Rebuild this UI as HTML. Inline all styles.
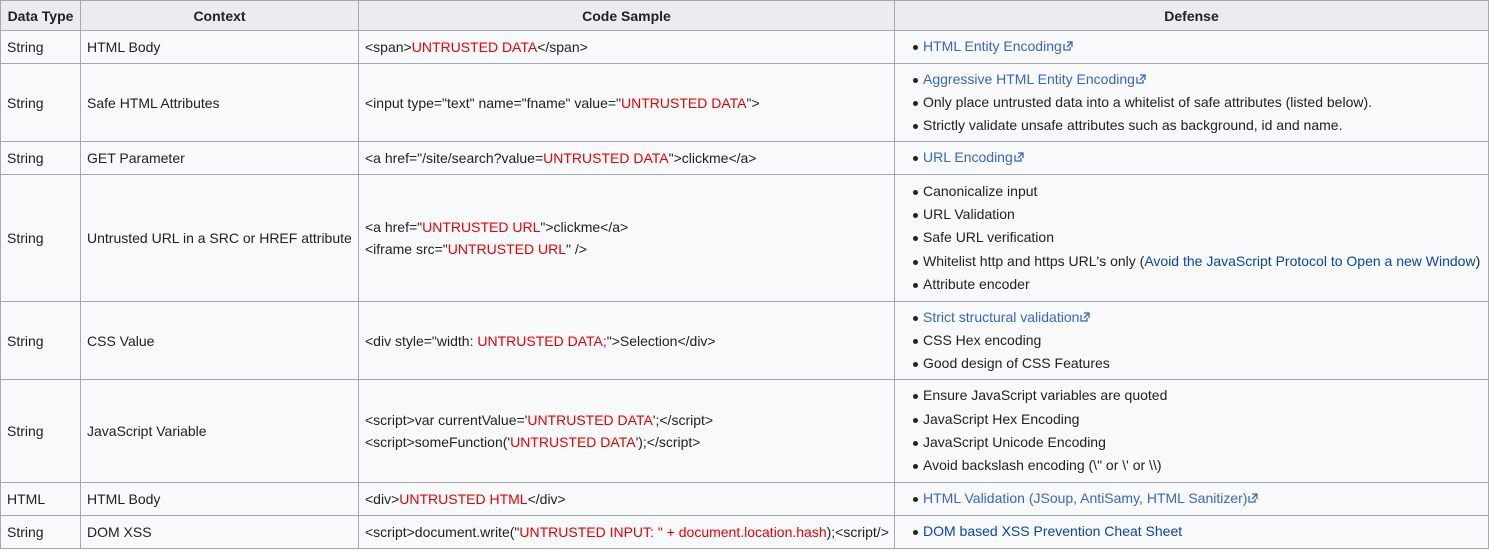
<!DOCTYPE html>
<html><head><meta charset="utf-8"><style>
body{margin:0;background:#fff;font-family:"Liberation Sans",Arial,sans-serif;font-size:14px;color:#202122}
table{position:absolute;left:0;top:0;border-collapse:collapse;table-layout:fixed;width:1488px;background:#f8f9fa}
td,th{border:1px solid #a2a9b1;padding:0 6px;vertical-align:middle;text-align:left;white-space:nowrap;overflow:hidden}
th{background:#eaecf0;text-align:center;font-weight:bold;height:29px}
.r{color:#ee0000}
a{color:#3366cc;text-decoration:none}
a.i{color:#0645ad}
ul{margin:0;padding:0 0 0 22px;list-style:none}
li{position:relative;line-height:23.3px}
li:before{content:"";position:absolute;left:-10px;top:10px;width:5px;height:5px;border-radius:50%;background:#202122}
.e{display:inline-block;width:10px;height:10px;vertical-align:0px;margin-left:1px}
.c div{line-height:22px}
</style></head><body>
<table>
<colgroup><col style="width:80px"><col style="width:278px"><col style="width:536px"><col style="width:594px"></colgroup>
<tr><th>Data Type</th><th>Context</th><th>Code Sample</th><th>Defense</th></tr>
<tr style="height:33px"><td>String</td><td>HTML Body</td><td>&lt;span&gt;<span class="r">UNTRUSTED DATA</span>&lt;/span&gt;</td><td><ul><li><a>HTML Entity Encoding</a><svg class="e" viewBox="0 0 10 10"><path d="M1 3v6h6V6M4 1h5v5M9 1L4 6" fill="none" stroke="#3366cc" stroke-width="1.3"/></svg></li></ul></td></tr>
<tr style="height:78px"><td>String</td><td>Safe HTML Attributes</td><td>&lt;input type="text" name="fname" value="<span class="r">UNTRUSTED DATA</span>"&gt;</td><td><ul><li><a>Aggressive HTML Entity Encoding</a><svg class="e" viewBox="0 0 10 10"><path d="M1 3v6h6V6M4 1h5v5M9 1L4 6" fill="none" stroke="#3366cc" stroke-width="1.3"/></svg></li><li>Only place untrusted data into a whitelist of safe attributes (listed below).</li><li>Strictly validate unsafe attributes such as background, id and name.</li></ul></td></tr>
<tr style="height:33px"><td>String</td><td>GET Parameter</td><td>&lt;a href="/site/search?value=<span class="r">UNTRUSTED DATA</span>"&gt;clickme&lt;/a&gt;</td><td><ul><li><a>URL Encoding</a><svg class="e" viewBox="0 0 10 10"><path d="M1 3v6h6V6M4 1h5v5M9 1L4 6" fill="none" stroke="#3366cc" stroke-width="1.3"/></svg></li></ul></td></tr>
<tr style="height:127px"><td>String</td><td>Untrusted URL in a SRC or HREF attribute</td><td class="c"><div>&lt;a href="<span class="r">UNTRUSTED URL</span>"&gt;clickme&lt;/a&gt;</div><div>&lt;iframe src="<span class="r">UNTRUSTED URL</span>" /&gt;</div></td><td><ul><li>Canonicalize input</li><li>URL Validation</li><li>Safe URL verification</li><li>Whitelist http and https URL's only (<a class="i">Avoid the JavaScript Protocol to Open a new Window</a>)</li><li>Attribute encoder</li></ul></td></tr>
<tr style="height:78px"><td>String</td><td>CSS Value</td><td>&lt;div style="width: <span class="r">UNTRUSTED DATA;</span>"&gt;Selection&lt;/div&gt;</td><td><ul><li><a>Strict structural validation</a><svg class="e" viewBox="0 0 10 10"><path d="M1 3v6h6V6M4 1h5v5M9 1L4 6" fill="none" stroke="#3366cc" stroke-width="1.3"/></svg></li><li>CSS Hex encoding</li><li>Good design of CSS Features</li></ul></td></tr>
<tr style="height:103px"><td>String</td><td>JavaScript Variable</td><td class="c"><div>&lt;script&gt;var currentValue='<span class="r">UNTRUSTED DATA</span>';&lt;/script&gt;</div><div>&lt;script&gt;someFunction('<span class="r">UNTRUSTED DATA</span>');&lt;/script&gt;</div></td><td><ul><li>Ensure JavaScript variables are quoted</li><li>JavaScript Hex Encoding</li><li>JavaScript Unicode Encoding</li><li>Avoid backslash encoding (\" or \' or \\)</li></ul></td></tr>
<tr style="height:33px"><td>HTML</td><td>HTML Body</td><td>&lt;div&gt;<span class="r">UNTRUSTED HTML</span>&lt;/div&gt;</td><td><ul><li><a>HTML Validation (JSoup, AntiSamy, HTML Sanitizer)</a><svg class="e" viewBox="0 0 10 10"><path d="M1 3v6h6V6M4 1h5v5M9 1L4 6" fill="none" stroke="#3366cc" stroke-width="1.3"/></svg></li></ul></td></tr>
<tr style="height:33px"><td>String</td><td>DOM XSS</td><td>&lt;script&gt;document.write("<span class="r">UNTRUSTED INPUT: " + document.location.hash</span>);&lt;script/&gt;</td><td><ul><li><a class="i">DOM based XSS Prevention Cheat Sheet</a></li></ul></td></tr>
</table>
</body></html>
